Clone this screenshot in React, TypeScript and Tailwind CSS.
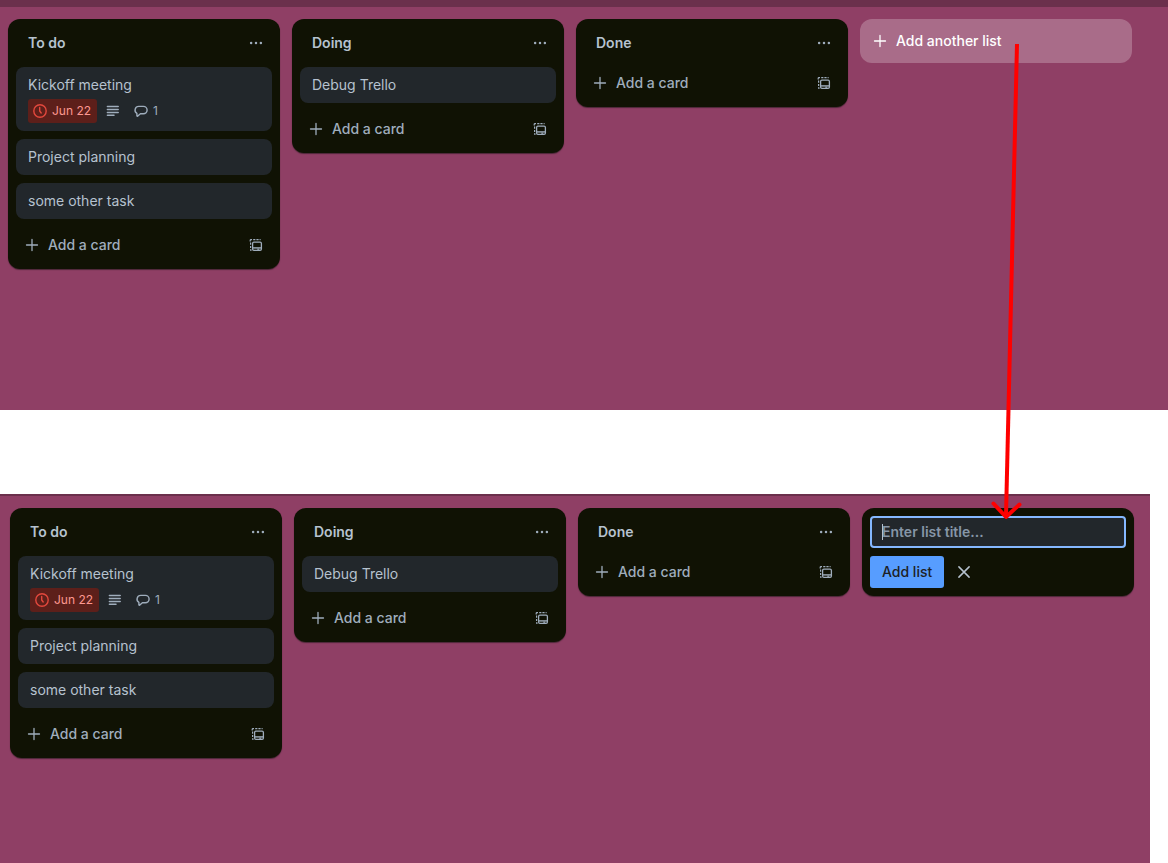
import React from "react";

type CardData = {
  title: string;
  due?: string;
  comments?: number;
};

type ListData = {
  title: string;
  cards: CardData[];
};

const lists: ListData[] = [
  {
    title: "To do",
    cards: [
      { title: "Kickoff meeting", due: "Jun 22", comments: 1 },
      { title: "Project planning" },
      { title: "some other task" },
    ],
  },
  { title: "Doing", cards: [{ title: "Debug Trello" }] },
  { title: "Done", cards: [] },
];

function PlusIcon() {
  return (
    <svg viewBox="0 0 16 16" className="size-4 shrink-0" fill="none" stroke="currentColor" strokeWidth="1.3" strokeLinecap="round" aria-hidden="true">
      <path d="M8 2.5v11M2.5 8h11" />
    </svg>
  );
}

function DotsIcon() {
  return (
    <svg viewBox="0 0 16 16" className="size-4" fill="currentColor" aria-hidden="true">
      <circle cx="3.1" cy="8" r="1.25" />
      <circle cx="8" cy="8" r="1.25" />
      <circle cx="12.9" cy="8" r="1.25" />
    </svg>
  );
}

function TemplateIcon() {
  return (
    <svg viewBox="0 0 16 16" className="size-4" fill="none" stroke="currentColor" aria-hidden="true">
      <rect x="4.6" y="5.1" width="8.8" height="8.2" rx="1.3" strokeWidth="1.3" />
      <path d="M5 10.9h8" strokeWidth="1.4" />
      <path d="M9.3 12.2h2" strokeWidth="1.2" />
      <path d="M2.2 4.4v-1q0-.8.8-.8h1M5.2 2.6h2.2M8.4 2.6h2.2M11.6 2.6h1M2.6 5.6v2.2M2.6 9v2M2.6 12.2v.9h1" strokeWidth="1.2" />
    </svg>
  );
}

function ClockIcon() {
  return (
    <svg viewBox="0 0 16 16" className="size-4" fill="none" stroke="currentColor" strokeWidth="1.4" strokeLinecap="round" strokeLinejoin="round" aria-hidden="true">
      <circle cx="8" cy="8" r="6.2" />
      <path d="M7.7 4.4V8l1.5 2" />
    </svg>
  );
}

function DescriptionIcon() {
  return (
    <svg viewBox="0 0 16 16" className="size-4" fill="none" stroke="currentColor" strokeWidth="1.5" strokeLinecap="round" aria-label="Has description">
      <path d="M2.4 3.6h10.8M2.4 6.5h10.8M2.4 9.4h10.8M2.4 12.3h6.6" />
    </svg>
  );
}

function CommentIcon() {
  return (
    <svg viewBox="0 0 16 16" className="size-4" fill="none" stroke="currentColor" strokeWidth="1.4" strokeLinejoin="round" aria-hidden="true">
      <path d="M5.8 3.4h4.6a3.7 3.7 0 0 1 0 7.4H7.4L4.8 13.1c-.4.3-.9.1-.9-.4v-2.4A3.7 3.7 0 0 1 5.8 3.4Z" />
    </svg>
  );
}

function CloseIcon() {
  return (
    <svg viewBox="0 0 16 16" className="size-4" fill="none" stroke="currentColor" strokeWidth="1.5" strokeLinecap="round" aria-hidden="true">
      <path d="M2.9 2.9l10.2 10.2M13.1 2.9L2.9 13.1" />
    </svg>
  );
}

function Card({ card }: { card: CardData }) {
  return (
    <li className="rounded-lg bg-[#22272b] px-3 py-2 text-[#b6c2cf]">
      <p>{card.title}</p>
      {card.due && (
        <div className="mt-1 flex h-6 items-center text-xs text-[#9fadbc]">
          <span className="flex h-6 items-center gap-1 rounded-[3px] bg-[#5d1f1a] pr-1.5 pl-1 text-[#fd9891]">
            <span className="text-[#e2483d]">
              <ClockIcon />
            </span>
            {card.due}
          </span>
          <span className="ml-2">
            <DescriptionIcon />
          </span>
          <span className="ml-3 flex items-center gap-1">
            <CommentIcon />
            {card.comments}
          </span>
        </div>
      )}
    </li>
  );
}

function List({ list }: { list: ListData }) {
  return (
    <section className="w-68 shrink-0 rounded-xl bg-[#101204] p-2 text-[#9fadbc] shadow-[0_1px_1px_#09100b80]">
      <header className="mb-2 flex h-8 items-center justify-between pl-3">
        <h2 className="font-semibold text-[#b6c2cf]">{list.title}</h2>
        <button type="button" aria-label={`${list.title} actions`} className="flex size-8 items-center justify-center rounded-lg">
          <DotsIcon />
        </button>
      </header>
      {list.cards.length > 0 && (
        <ul className="mb-2.5 flex flex-col gap-2">
          {list.cards.map((card) => (
            <Card key={card.title} card={card} />
          ))}
        </ul>
      )}
      <footer className="flex h-8 items-center justify-between">
        <button type="button" className="flex h-8 grow items-center gap-2 rounded-lg pl-2 font-medium">
          <PlusIcon />
          Add a card
        </button>
        <button type="button" aria-label="Create from template" className="flex size-8 items-center justify-center rounded-lg">
          <TemplateIcon />
        </button>
      </footer>
    </section>
  );
}

function NewListForm() {
  return (
    <form className="w-68 shrink-0 rounded-xl bg-[#101204] p-2 shadow-[0_1px_1px_#09100b80]" onSubmit={(e) => e.preventDefault()}>
      <div className="relative">
        <input
          type="text"
          aria-label="List title"
          placeholder="Enter list title..."
          className="block h-8 w-full rounded-[4px] border-2 border-[#85b8ff] bg-[#22272b] px-2.5 pb-0.5 font-semibold text-[#b6c2cf] outline-none placeholder:text-[#8696a7]"
        />
        <span className="absolute top-2 left-3 h-4 w-px bg-[#b6c2cf]" />
      </div>
      <div className="mt-2 flex items-center gap-1">
        <button type="submit" className="h-8 rounded-[3px] bg-[#579dff] px-3 font-medium text-[#1d2125]">
          Add list
        </button>
        <button type="button" aria-label="Cancel" className="flex size-8 items-center justify-center text-[#b6c2cf]">
          <CloseIcon />
        </button>
      </div>
    </form>
  );
}

function Lists({ children }: { children: React.ReactNode }) {
  return (
    <div className="flex items-start gap-3">
      {lists.map((list) => (
        <List key={list.title} list={list} />
      ))}
      {children}
    </div>
  );
}

export default function App() {
  return (
    <main className="relative flex min-h-screen flex-col overflow-x-hidden bg-white font-['Inter','Liberation_Sans',sans-serif] text-sm leading-5">
      <div className="border-t-7 border-[#6b304c] bg-[#8f3f65] px-2 pt-3 pb-[141px]">
        <Lists>
          <button type="button" className="flex h-11 w-68 shrink-0 items-center gap-2 rounded-xl bg-white/24 px-3 font-medium text-white">
            <PlusIcon />
            Add another list
          </button>
        </Lists>
      </div>
      <div className="mt-21 mr-4.5 grow border-t-2 border-[#6b304c] bg-[#8f3f65] px-2.5 pt-3 pb-26">
        <Lists>
          <NewListForm />
        </Lists>
      </div>
      <svg
        viewBox="0 0 40 490"
        className="pointer-events-none absolute top-9 left-[985px] h-[490px] w-10"
        fill="none"
        stroke="#ff0000"
        strokeWidth="4"
        aria-hidden="true"
      >
        <path d="M32 8L21 480" />
        <path d="M8.5 467.5L21 481L34.5 468.500" strokeLinecap="round" strokeLinejoin="round" />
      </svg>
    </main>
  );
}
